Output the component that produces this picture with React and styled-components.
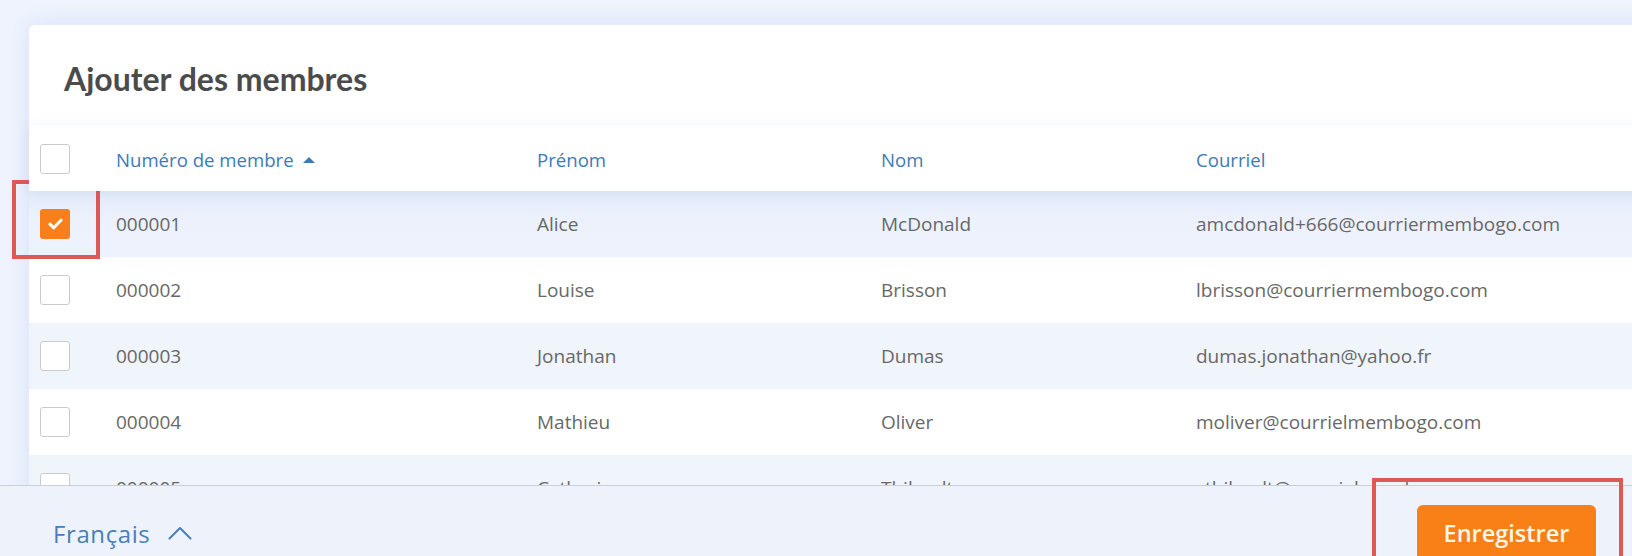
import React from "react";
import styled, { createGlobalStyle } from "styled-components";

const GlobalStyle = createGlobalStyle`
  html, body {
    margin: 0;
    padding: 0;
    background: #eef3fd;
    overflow: hidden;
  }
  * {
    box-sizing: border-box;
  }
`;

const rows = [
  { id: "000001", first: "Alice", last: "McDonald", email: "amcdonald+666@courriermembogo.com", checked: true },
  { id: "000002", first: "Louise", last: "Brisson", email: "lbrisson@courriermembogo.com" },
  { id: "000003", first: "Jonathan", last: "Dumas", email: "dumas.jonathan@yahoo.fr" },
  { id: "000004", first: "Mathieu", last: "Oliver", email: "moliver@courrielmembogo.com" },
  { id: "000005", first: "Catherine", last: "Thibault", email: "cthibault@courrielmembogo.com" },
  { id: "000006", first: "Marc", last: "Tremblay", email: "mtremblay@courrielmembogo.com" }
];

const Root = styled.div`
  position: relative;
  width: 100vw;
  height: 100vh;
  display: flex;
  flex-direction: column;
  overflow: hidden;
  font-family: "Open Sans", "Liberation Sans", sans-serif;
`;

const Main = styled.main`
  height: 485px;
  flex-shrink: 0;
  overflow: hidden;
  padding: 25px 0 0 29px;
`;

const Card = styled.section`
  margin-right: -40px;
  background: #ffffff;
  border-radius: 6px;
  box-shadow: 0 0 22px rgba(80, 120, 210, 0.14);
`;

const Title = styled.h1`
  margin: 0;
  height: 100px;
  padding: 6px 0 0 35px;
  display: flex;
  align-items: center;
  font-family: Lato, "Open Sans", sans-serif;
  font-size: 32px;
  font-weight: 700;
  color: #4b4b4b;
`;

const Table = styled.div`
  display: flex;
  flex-direction: column;
`;

const Line = styled.div`
  position: relative;
  display: grid;
  grid-template-columns: 76px 421px 344px 315px 1fr;
  align-items: center;
  height: 66px;
  padding-left: 11px;
  background: ${p => p.$bg};
`;

const HeadLine = styled(Line)`
  z-index: 1;
  padding-top: 2px;
  box-shadow: 0 2px 14px rgba(70, 100, 170, 0.09);
`;

const HeadCell = styled.div`
  display: flex;
  align-items: center;
  gap: 9px;
  font-size: 18.6px;
  color: #3e7ab4;
`;

const Cell = styled.div`
  font-size: 19px;
  color: #686868;
  white-space: nowrap;
`;

const SortArrow = styled.span`
  width: 0;
  height: 0;
  border-left: 6px solid transparent;
  border-right: 6px solid transparent;
  border-bottom: 6px solid #3e7ab4;
  margin-top: 1px;
`;

const Box = styled.span`
  width: 30px;
  height: 30px;
  border-radius: 3px;
  display: flex;
  align-items: center;
  justify-content: center;
  background: ${p => (p.$checked ? "#f97f1a" : "#ffffff")};
  border: ${p => (p.$checked ? "none" : "1px solid #cacaca")};
`;

const Footer = styled.footer`
  flex-shrink: 0;
  height: 110px;
  display: flex;
  align-items: flex-start;
  justify-content: space-between;
  padding: 19px 36px 0 53px;
  background: #eef3fb;
  border-top: 1px solid #cbd0d8;
`;

const LangButton = styled.button`
  height: 56px;
  display: flex;
  align-items: center;
  gap: 18px;
  padding: 0;
  border: none;
  background: none;
  font-family: "Open Sans", sans-serif;
  font-size: 24px;
  letter-spacing: 0.6px;
  color: #4a7fb6;
`;

const SaveButton = styled.button`
  width: 179px;
  height: 56px;
  border: none;
  border-radius: 6px;
  background: #f97f17;
  color: #fff6e8;
  font-family: "Open Sans", sans-serif;
  font-size: 23.5px;
  font-weight: 600;
`;

const Callout = styled.div`
  position: absolute;
  left: ${p => p.$x}px;
  top: ${p => p.$y}px;
  width: ${p => p.$w}px;
  height: ${p => p.$h}px;
  border: 4px solid #df5858;
  pointer-events: none;
`;

const Check = ({ checked }) => (
  <Box $checked={checked}>
    {checked && (
      <svg width="15" height="12" viewBox="0 0 15 12">
        <polyline
          points="2,6.2 5.8,9.8 13,2.2"
          fill="none"
          stroke="#ffffff"
          strokeWidth="3"
          strokeLinecap="round"
          strokeLinejoin="round"
        />
      </svg>
    )}
  </Box>
);

const ChevronUp = () => (
  <svg width="24" height="14" viewBox="0 0 24 14">
    <polyline
      points="1.5,12.5 12,2 22.5,12.5"
      fill="none"
      stroke="#4a7fb6"
      strokeWidth="2"
      strokeLinecap="round"
      strokeLinejoin="round"
    />
  </svg>
);

const rowBg = (row, i) => {
  if (row.checked) return "linear-gradient(#e3ebfa, #ecf1fc 40%, #edf2fc)";
  return i % 2 === 0 ? "#f0f4fb" : "#ffffff";
};

export default function App() {
  return (
    <Root>
      <GlobalStyle />
      <Main>
        <Card>
          <Title>Ajouter des membres</Title>
          <Table>
            <HeadLine $bg="#ffffff">
              <Check />
              <HeadCell>
                Numéro de membre
                <SortArrow />
              </HeadCell>
              <HeadCell>Prénom</HeadCell>
              <HeadCell>Nom</HeadCell>
              <HeadCell>Courriel</HeadCell>
            </HeadLine>
            {rows.map((row, i) => (
              <Line key={row.id} $bg={rowBg(row, i)}>
                <Check checked={row.checked} />
                <Cell>{row.id}</Cell>
                <Cell>{row.first}</Cell>
                <Cell>{row.last}</Cell>
                <Cell>{row.email}</Cell>
              </Line>
            ))}
          </Table>
        </Card>
      </Main>
      <Footer>
        <LangButton>
          Français
          <ChevronUp />
        </LangButton>
        <SaveButton>Enregistrer</SaveButton>
      </Footer>
      <Callout $x={12} $y={180} $w={88} $h={79} />
      <Callout $x={1372} $y={478} $w={251} $h={110} />
    </Root>
  );
}
